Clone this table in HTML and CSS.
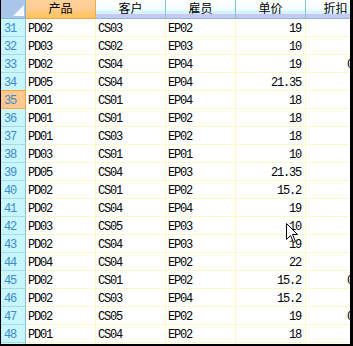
FILE: index.html
```html
<!DOCTYPE html>
<html>
<head>
<meta charset="utf-8">
<link rel="stylesheet" href="styles.css">
</head>
<body>
<div class="frame">
  <div class="sheet">
    <div class="row head">
      <div class="hc corner"><svg class="tri" width="11" height="11" viewBox="0 0 11 11"><defs><linearGradient id="g" x1="0" y1="0" x2="1" y2="1"><stop offset="0" stop-color="#e8f0fa"/><stop offset="1" stop-color="#ffffff"/></linearGradient></defs><polygon points="11,0 11,11 0,11" fill="url(#g)"/></svg></div>
      <div class="hc sel">产品</div>
      <div class="hc">客户</div>
      <div class="hc">雇员</div>
      <div class="hc">单价</div>
      <div class="hc disc">折扣</div>
    </div>
    <div class="row"><div class="rh">31</div><div class="c">PD02</div><div class="c">CS03</div><div class="c">EP02</div><div class="c num">19</div><div class="c num dv"></div></div>
    <div class="row"><div class="rh">32</div><div class="c">PD03</div><div class="c">CS02</div><div class="c">EP03</div><div class="c num">10</div><div class="c num dv"></div></div>
    <div class="row"><div class="rh">33</div><div class="c">PD02</div><div class="c">CS04</div><div class="c">EP04</div><div class="c num">19</div><div class="c num dv">0.1</div></div>
    <div class="row"><div class="rh">34</div><div class="c">PD05</div><div class="c">CS04</div><div class="c">EP04</div><div class="c num">21.35</div><div class="c num dv"></div></div>
    <div class="row"><div class="rh cur">35</div><div class="c">PD01</div><div class="c">CS01</div><div class="c">EP04</div><div class="c num">18</div><div class="c num dv"></div></div>
    <div class="row"><div class="rh">36</div><div class="c">PD01</div><div class="c">CS01</div><div class="c">EP02</div><div class="c num">18</div><div class="c num dv"></div></div>
    <div class="row"><div class="rh">37</div><div class="c">PD01</div><div class="c">CS03</div><div class="c">EP02</div><div class="c num">18</div><div class="c num dv"></div></div>
    <div class="row"><div class="rh">38</div><div class="c">PD03</div><div class="c">CS01</div><div class="c">EP01</div><div class="c num">10</div><div class="c num dv"></div></div>
    <div class="row"><div class="rh">39</div><div class="c">PD05</div><div class="c">CS04</div><div class="c">EP03</div><div class="c num">21.35</div><div class="c num dv"></div></div>
    <div class="row"><div class="rh">40</div><div class="c">PD02</div><div class="c">CS01</div><div class="c">EP02</div><div class="c num">15.2</div><div class="c num dv"></div></div>
    <div class="row"><div class="rh">41</div><div class="c">PD02</div><div class="c">CS04</div><div class="c">EP04</div><div class="c num">19</div><div class="c num dv"></div></div>
    <div class="row"><div class="rh">42</div><div class="c">PD03</div><div class="c">CS05</div><div class="c">EP03</div><div class="c num">10</div><div class="c num dv"></div></div>
    <div class="row"><div class="rh">43</div><div class="c">PD02</div><div class="c">CS04</div><div class="c">EP03</div><div class="c num">19</div><div class="c num dv"></div></div>
    <div class="row"><div class="rh">44</div><div class="c">PD04</div><div class="c">CS04</div><div class="c">EP02</div><div class="c num">22</div><div class="c num dv"></div></div>
    <div class="row"><div class="rh">45</div><div class="c">PD02</div><div class="c">CS01</div><div class="c">EP02</div><div class="c num">15.2</div><div class="c num dv">0.1</div></div>
    <div class="row"><div class="rh">46</div><div class="c">PD02</div><div class="c">CS03</div><div class="c">EP04</div><div class="c num">15.2</div><div class="c num dv"></div></div>
    <div class="row"><div class="rh">47</div><div class="c">PD02</div><div class="c">CS05</div><div class="c">EP02</div><div class="c num">19</div><div class="c num dv">0.1</div></div>
    <div class="row"><div class="rh">48</div><div class="c">PD01</div><div class="c">CS04</div><div class="c">EP02</div><div class="c num">18</div><div class="c num dv"></div></div>
    <div class="row"><div class="rh">49</div><div class="c"></div><div class="c"></div><div class="c"></div><div class="c num"></div><div class="c num dv"></div></div>
  </div>
  <svg class="cursor" width="13" height="21" viewBox="0 0 13 21"><polygon points="0.5,0.5 0.5,16.5 4.5,12.5 7.5,19.5 9.5,18.5 6.5,11.5 11.5,11.5" fill="#fff" stroke="#000" stroke-width="1" stroke-linejoin="miter"/></svg>
</div>
</body>
</html>
```
FILE: styles.css
```css
html, body {
  margin: 0;
  padding: 0;
  background: #ffffff;
}

.frame {
  position: relative;
  width: 353px;
  height: 346px;
  box-sizing: border-box;
  border-left: 1px solid #000;
  border-right: 3px solid #000;
  border-bottom: 2px solid #000;
  overflow: hidden;
  background: #ffffff;
}

.sheet {
  width: 375px;
}

.row {
  display: grid;
  grid-template-columns: 25px 70px 70px 70px 70px 70px;
  height: 18px;
}

.row.head {
  height: 19px;
}

.hc {
  box-sizing: border-box;
  height: 19px;
  border-right: 1px solid #86c4cc;
  border-bottom: 1px solid #86bccc;
  background: linear-gradient(to bottom, #ffffff 0, #f4fdfe 10px, #d4f6fa 11px, #d4f6fa 14px, #c8c8f6 14px, #c8c8f6 18px);
  font-family: "Noto Sans CJK SC", "Noto Sans", sans-serif;
  font-size: 12px;
  line-height: 16px;
  text-align: center;
  color: #000;
  white-space: nowrap;
  overflow: hidden;
}

.hc.corner {
  position: relative;
  background: #a9c6e9;
  border-right: 1px solid #86b4cc;
}

.tri {
  position: absolute;
  right: 1px;
  bottom: 2px;
  display: block;
}

.hc.sel {
  background: linear-gradient(to bottom, #ffd09a 0, #ffcc92 10px, #ffc878 11px, #ffc460 18px);
  border-left: 1px solid #f3a845;
  border-right: 1px solid #f3a845;
  margin-left: -1px;
  border-bottom: 1px solid #f3a845;
}

.hc.disc {
  padding-right: 10px;
}

.rh {
  box-sizing: border-box;
  height: 18px;
  padding-left: 3px;
  background: #c9f6fc;
  border-right: 1px solid #86c4cc;
  border-bottom: 1px solid #a4dce4;
  color: #3a8ccc;
  font-family: "Liberation Mono", monospace;
  font-size: 12px;
  letter-spacing: -1.2px;
  line-height: 21px;
  overflow: hidden;
  white-space: nowrap;
}

.rh.cur {
  background: #ffc890;
  border-right: 1px solid #f3a845;
  border-bottom: 1px solid #f3a845;
  box-shadow: 0 -1px 0 #f3a845;
}

.c {
  box-sizing: border-box;
  height: 18px;
  padding-left: 2px;
  border-right: 1px solid #fafac4;
  border-bottom: 1px solid #fafac4;
  color: #000;
  font-family: "Liberation Mono", monospace;
  font-size: 12px;
  letter-spacing: -1.2px;
  line-height: 21px;
  overflow: hidden;
  white-space: nowrap;
}

.c.num {
  text-align: right;
  padding-left: 0;
  padding-right: 4px;
}

.c.dv {
  padding-right: 10px;
}

.cursor {
  position: absolute;
  left: 285px;
  top: 223px;
  display: block;
}
```
